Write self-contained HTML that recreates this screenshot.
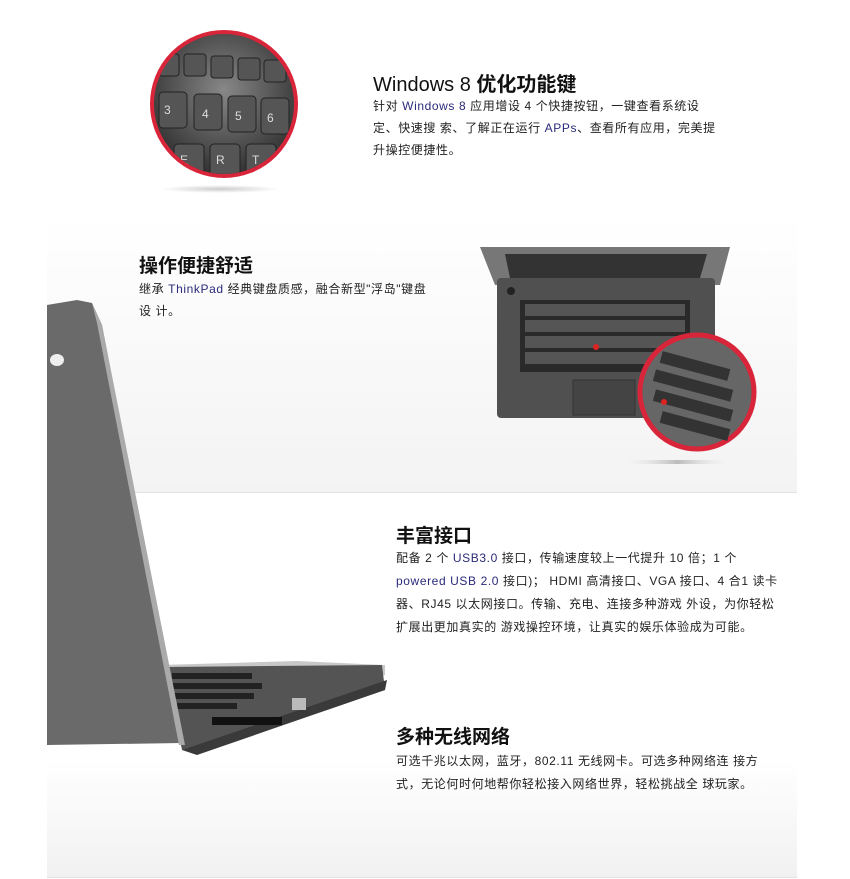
<!DOCTYPE html>
<html><head><meta charset="utf-8"><style>
*{margin:0;padding:0}
body{width:850px;height:879px;background:#fff;position:relative;overflow:hidden;font-family:"Liberation Sans","Noto Sans CJK SC",sans-serif;color:#222}
.abs{position:absolute}
.h{font-weight:bold;font-size:19px;color:#111}
.p{font-size:12px;color:#222;letter-spacing:0.6px;white-space:nowrap}
.b{color:#2a2a7a}
</style></head><body>
<div class="abs" style="left:47px;top:215px;width:750px;height:277px;background:linear-gradient(#fff,#f3f3f3)"></div>
<div class="abs" style="left:47px;top:492px;width:750px;height:1px;background:#e2e2e2"></div>
<div class="abs" style="left:47px;top:760px;width:750px;height:117px;background:linear-gradient(#fff,#f1f1f1)"></div>
<div class="abs" style="left:47px;top:877px;width:750px;height:1px;background:#e2e2e2"></div>

<div class="abs" style="left:160px;top:185px;width:120px;height:8px;border-radius:50%;background:radial-gradient(#ccc,rgba(255,255,255,0) 70%)"></div>
<div class="abs" style="left:150px;top:30px;width:140px;height:140px;border-radius:50%;border:4px solid #d8253a;background:radial-gradient(circle at 50% 40%,#888,#3a3a3a 70%,#222);overflow:hidden">
 <svg width="140" height="140"><g fill="#555" stroke="#222"><rect x="5" y="20" width="20" height="22" rx="3"/><rect x="30" y="20" width="22" height="22" rx="3"/><rect x="57" y="22" width="22" height="22" rx="3"/><rect x="84" y="24" width="22" height="22" rx="3"/><rect x="110" y="26" width="22" height="22" rx="3"/>
 <rect x="5" y="58" width="28" height="36" rx="4"/><rect x="40" y="60" width="28" height="36" rx="4"/><rect x="74" y="62" width="28" height="36" rx="4"/><rect x="107" y="64" width="28" height="36" rx="4"/>
 <rect x="20" y="110" width="30" height="36" rx="4"/><rect x="56" y="110" width="30" height="36" rx="4"/><rect x="92" y="110" width="30" height="36" rx="4"/></g>
 <g fill="#ddd" font-size="12" font-family="Liberation Sans"><text x="10" y="80">3</text><text x="48" y="84">4</text><text x="81" y="86">5</text><text x="113" y="88">6</text><text x="26" y="130">E</text><text x="62" y="130">R</text><text x="98" y="130">T</text></g></svg>
</div>

<div class="abs" style="left:373px;top:68px;font-size:20px;color:#111">Windows 8 <b>优化功能键</b></div>
<div class="abs p" style="left:373px;top:95px;line-height:22px">针对 <span class="b">Windows 8</span> 应用增设 4 个快捷按钮，一键查看系统设<br>定、快速搜 索、了解正在运行 <span class="b">APPs</span>、查看所有应用，完美提<br>升操控便捷性。</div>

<div class="abs h" style="left:139px;top:251px">操作便捷舒适</div>
<div class="abs p" style="left:139px;top:278px;line-height:22px">继承 <span class="b">ThinkPad</span> 经典键盘质感，融合新型"浮岛"键盘<br>设 计。</div>

<svg class="abs" style="left:475px;top:240px" width="290" height="230">
 <defs><linearGradient id="sh" x1="0" x2="1"><stop offset="0" stop-color="#fff" stop-opacity="0"/><stop offset=".5" stop-color="#bbb"/><stop offset="1" stop-color="#fff" stop-opacity="0"/></linearGradient></defs>
 <polygon points="5,7 255,7 245,45 20,45" fill="#777"/>
 <polygon points="30,14 232,14 225,38 35,38" fill="#333"/>
 <rect x="22" y="38" width="218" height="140" rx="4" fill="#505050"/>
 <rect x="45" y="60" width="170" height="72" fill="#2a2a2a"/>
 <g fill="#555"><rect x="50" y="64" width="160" height="12"/><rect x="50" y="80" width="160" height="12"/><rect x="50" y="96" width="160" height="12"/><rect x="50" y="112" width="160" height="12"/></g>
 <circle cx="121" cy="107" r="3" fill="#d22"/>
 <rect x="98" y="140" width="62" height="35" fill="#444" stroke="#333"/>
 <circle cx="36" cy="51" r="4" fill="#222"/>
 <rect x="140" y="220" width="125" height="4" fill="url(#sh)"/>
 <circle cx="222" cy="152" r="57" fill="#666" stroke="#d8253a" stroke-width="5"/>
 <g fill="#333"><rect x="185" y="120" width="70" height="12" transform="rotate(15 220 126)"/><rect x="178" y="140" width="80" height="12" transform="rotate(15 220 146)"/><rect x="178" y="160" width="80" height="12" transform="rotate(15 220 166)"/><rect x="185" y="180" width="70" height="12" transform="rotate(15 220 186)"/></g>
 <circle cx="189" cy="162" r="3" fill="#d22"/>
</svg>

<svg class="abs" style="left:47px;top:295px" width="345" height="465">
 <polygon points="113,370 250,366 338,370 338,380 120,420" fill="#c8c8c8"/>
 <polygon points="118,372 335,370 338,395 280,415 150,455 135,455" fill="#545454"/>
 <g fill="#222"><rect x="125" y="378" width="80" height="6"/><rect x="125" y="388" width="90" height="6"/><rect x="127" y="398" width="80" height="6"/><rect x="130" y="408" width="60" height="6"/></g>
 <polygon points="135,455 340,385 338,395 150,460" fill="#3a3a3a"/>
 <g fill="#111"><rect x="165" y="422" width="70" height="8"/></g>
 <rect x="245" y="403" width="14" height="12" fill="#bbb"/>
 <polygon points="0,10 30,5 45,8 55,30 135,448 0,450" fill="#6a6a6a"/>
 <polygon points="45,8 55,30 138,450 132,450 50,28" fill="#aaa"/>
 <ellipse cx="10" cy="65" rx="7" ry="6" fill="#eee"/>
</svg>

<div class="abs h" style="left:396px;top:521px">丰富接口</div>
<div class="abs p" style="left:396px;top:547px;line-height:23px">配备 2 个 <span class="b">USB3.0</span> 接口，传输速度较上一代提升 10 倍；1 个<br><span class="b">powered USB 2.0</span> 接口)； HDMI 高清接口、VGA 接口、4 合1 读卡<br>器、RJ45 以太网接口。传输、充电、连接多种游戏 外设，为你轻松<br>扩展出更加真实的 游戏操控环境，让真实的娱乐体验成为可能。</div>

<div class="abs h" style="left:396px;top:722px">多种无线网络</div>
<div class="abs p" style="left:396px;top:750px;line-height:23px">可选千兆以太网，蓝牙，802.11 无线网卡。可选多种网络连 接方<br>式，无论何时何地帮你轻松接入网络世界，轻松挑战全 球玩家。</div>
</body></html>
